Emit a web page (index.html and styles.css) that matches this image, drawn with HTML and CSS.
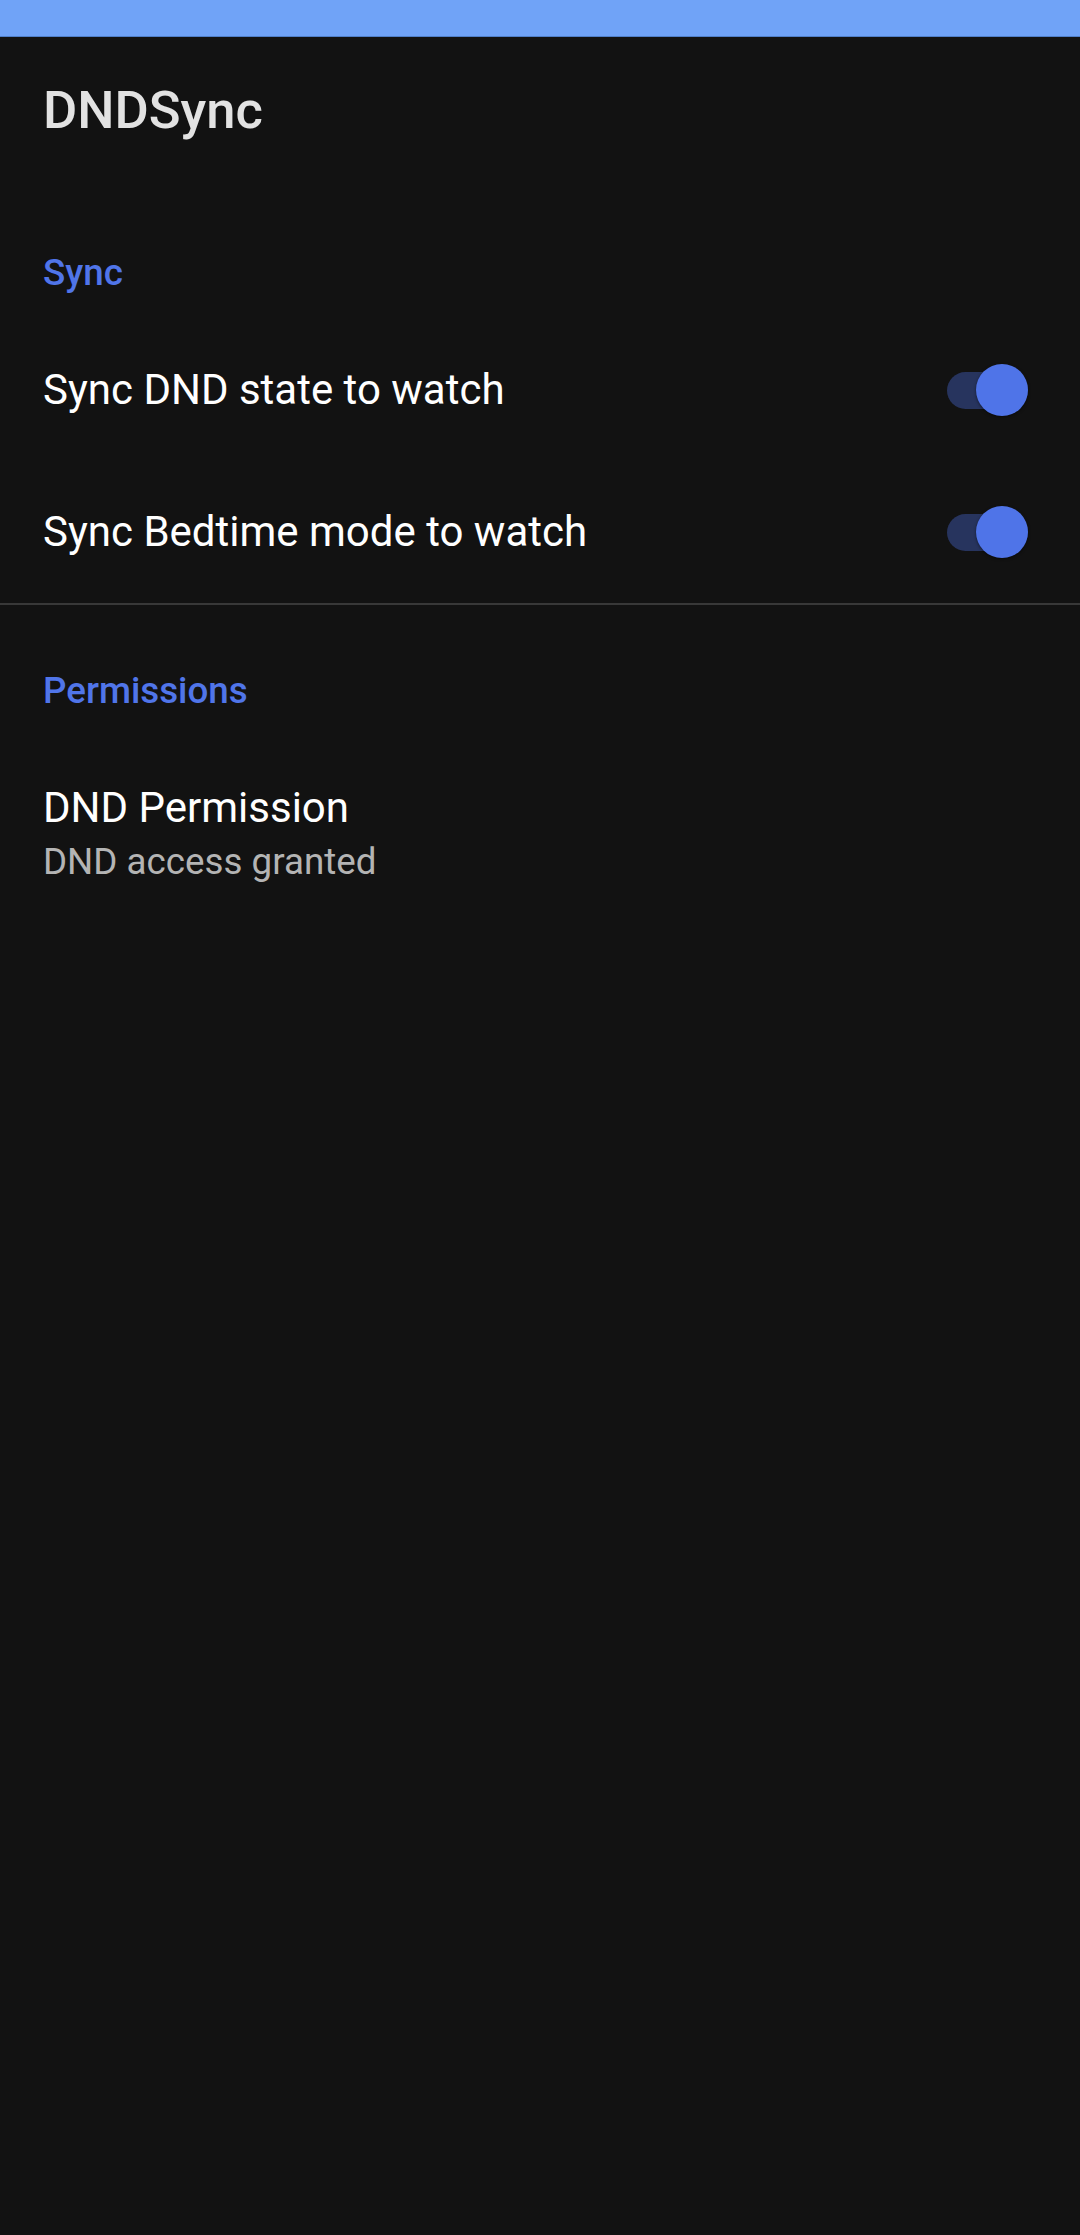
FILE: index.html
```html
<!DOCTYPE html>
<html>
<head>
<meta charset="utf-8">
<link rel="stylesheet" href="styles.css">
</head>
<body>
<div class="status-bar"></div>
<header class="toolbar"><h1 class="title">DNDSync</h1></header>
<main class="prefs">
  <section class="category">
    <div class="category-title">Sync</div>
    <div class="pref-row">
      <div class="pref-text">Sync DND state to watch</div>
      <div class="switch on"><span class="track"></span><span class="thumb"></span></div>
    </div>
    <div class="pref-row">
      <div class="pref-text">Sync Bedtime mode to watch</div>
      <div class="switch on"><span class="track"></span><span class="thumb"></span></div>
    </div>
  </section>
  <div class="divider"></div>
  <section class="category">
    <div class="category-title perm">Permissions</div>
    <div class="pref-item">
      <div class="pref-title">DND Permission</div>
      <div class="pref-summary">DND access granted</div>
    </div>
  </section>
</main>
</body>
</html>
```
FILE: styles.css
```css
html, body {
  margin: 0;
  padding: 0;
  background: #121212;
  font-family: Roboto, "Noto Sans", "Liberation Sans", sans-serif;
  width: 1080px;
  height: 2235px;
  overflow: hidden;
}
.status-bar {
  height: 36px;
  background: #70a3f7;
  border-bottom: 1px solid #4f7fc9;
}
.toolbar {
  height: 146px;
  display: flex;
  align-items: center;
  padding: 0 43px;
}
.title {
  margin: 0;
  font-size: 52.5px;
  line-height: 1;
  font-weight: 500;
  color: #e2e2e2;
}
.category-title {
  font-size: 36.75px;
  line-height: 1;
  font-weight: 500;
  color: #5075e9;
  padding: 72px 43px 0;
}
.category-title.perm {
  padding-top: 68px;
}
.pref-row {
  height: 142px;
  display: flex;
  align-items: center;
  justify-content: space-between;
  padding: 0 43px;
}
.category-title + .pref-row {
  margin-top: 27px;
}
.pref-text, .pref-title {
  font-size: 42px;
  line-height: 1;
  color: #ffffff;
}
.switch {
  position: relative;
  width: 81px;
  height: 52px;
  margin-right: 9px;
}
.switch .track {
  position: absolute;
  left: 0;
  right: 0;
  top: 8px;
  height: 37px;
  border-radius: 18.5px;
  background: #27345e;
}
.switch .thumb {
  position: absolute;
  right: 0;
  top: 0;
  width: 52px;
  height: 52px;
  border-radius: 50%;
  background: #4f74e8;
  box-shadow: 0 1px 3px rgba(0,0,0,0.5);
}
.divider {
  height: 2px;
  background: #383838;
}
.pref-item {
  padding: 77px 43px 0;
}
.pref-summary {
  margin-top: 15px;
  font-size: 36.75px;
  line-height: 1;
  color: #b4b4b4;
}
```
